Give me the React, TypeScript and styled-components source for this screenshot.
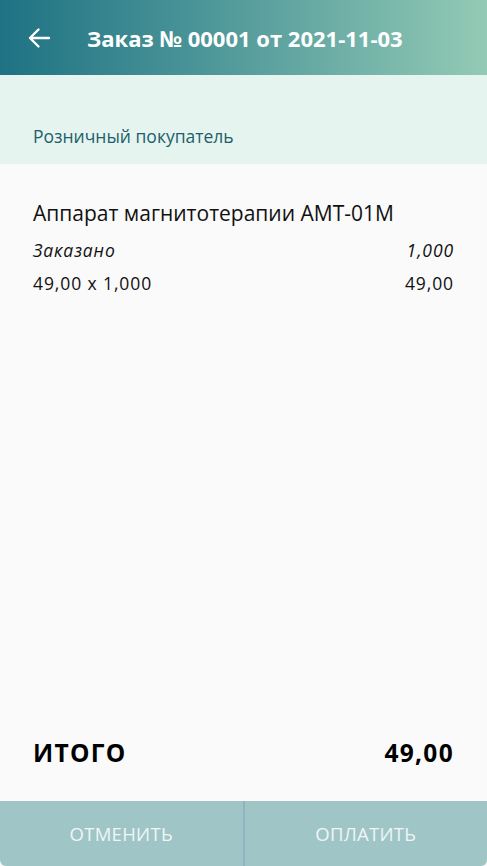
import React from 'react';
import styled, { createGlobalStyle } from 'styled-components';

const GlobalStyle = createGlobalStyle`
  html, body, #root {
    height: 100%;
    margin: 0;
    padding: 0;
  }
  body {
    font-family: "Open Sans", Lato, sans-serif;
    background: #fafafa;
  }
`;

const Screen = styled.div`
  height: 100%;
  display: flex;
  flex-direction: column;
  background: #fafafa;
`;

const Header = styled.header`
  height: 75px;
  flex-shrink: 0;
  display: flex;
  align-items: center;
  padding-left: 25px;
  background: linear-gradient(90deg, #1e7283 0%, #4a9498 40%, #93cab5 100%);
  color: #fff;
`;

const BackButton = styled.button`
  width: 28px;
  height: 28px;
  padding: 0;
  border: none;
  background: none;
  display: flex;
  align-items: center;
  justify-content: center;
  margin-right: 34px;
  cursor: pointer;
`;

const Title = styled.h1`
  margin: 0;
  font-size: 22px;
  font-weight: 700;
`;

const Customer = styled.div`
  height: 89px;
  flex-shrink: 0;
  box-sizing: border-box;
  padding: 49px 33px 0;
  background: #e5f4ef;
  color: #1d5f6b;
  font-size: 17.5px;
`;

const Body = styled.main`
  flex: 1;
  display: flex;
  flex-direction: column;
  padding: 0 33px;
`;

const ProductName = styled.div`
  margin-top: 35px;
  margin-bottom: 7px;
  font-size: 21px;
  color: #111;
`;

const Row = styled.div<{ italic?: boolean }>`
  display: flex;
  justify-content: space-between;
  font-size: 17.5px;
  letter-spacing: 0.9px;
  color: #111;
  line-height: 33px;
  font-style: ${(p) => (p.italic ? 'italic' : 'normal')};
`;

const Total = styled.div`
  margin-top: auto;
  display: flex;
  justify-content: space-between;
  align-items: center;
  height: 96px;
  padding-bottom: 1px;
  font-size: 24.5px;
  letter-spacing: 1.3px;
  font-weight: 700;
  color: #000;
`;

const Actions = styled.div`
  height: 65px;
  flex-shrink: 0;
  display: flex;
  background: #a0c5c6;
  border-radius: 0 0 6px 6px;
  overflow: hidden;
`;

const ActionButton = styled.button<{ divided?: boolean }>`
  flex: 1;
  border: none;
  background: none;
  color: #eef6f6;
  font-family: inherit;
  font-size: 18.5px;
  letter-spacing: 0.3px;
  text-transform: uppercase;
  border-left: ${(p) => (p.divided ? '2px solid #8fb4bf' : 'none')};
  cursor: pointer;
`;

const App = () => {
  return (
    <>
      <GlobalStyle />
      <Screen>
        <Header>
          <BackButton aria-label="Назад">
            <svg width="24" height="22" viewBox="0 0 24 22" fill="none">
              <path d="M22 11H3M11.5 2.5L3 11l8.5 8.5" stroke="#fff" strokeWidth="2.4" strokeLinecap="round" strokeLinejoin="round" />
            </svg>
          </BackButton>
          <Title>Заказ № 00001 от 2021-11-03</Title>
        </Header>
        <Customer>Розничный покупатель</Customer>
        <Body>
          <ProductName>Аппарат магнитотерапии АМТ-01М</ProductName>
          <Row italic>
            <span>Заказано</span>
            <span>1,000</span>
          </Row>
          <Row>
            <span>49,00 x 1,000</span>
            <span>49,00</span>
          </Row>
          <Total>
            <span>ИТОГО</span>
            <span>49,00</span>
          </Total>
        </Body>
        <Actions>
          <ActionButton>Отменить</ActionButton>
          <ActionButton divided>Оплатить</ActionButton>
        </Actions>
      </Screen>
    </>
  );
};

export default App;
